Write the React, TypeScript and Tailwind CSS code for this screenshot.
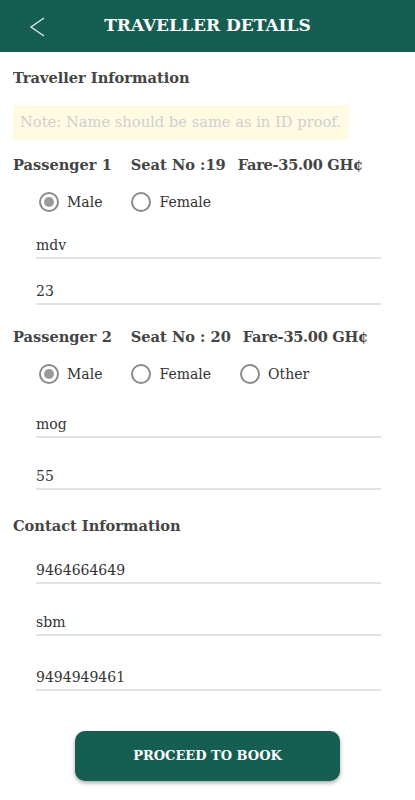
import { useState } from 'react'

const serif = { fontFamily: '"DejaVu Serif", "Liberation Serif", serif' }

function Radio({ label, checked, onClick }: { label: string; checked: boolean; onClick: () => void }) {
  return (
    <button onClick={onClick} className="flex items-center gap-[8px] text-[14px] text-[#333]">
      <span className="w-[20px] h-[20px] rounded-full border-2 border-[#8a8a8a] flex items-center justify-center">
        {checked && <span className="w-[10px] h-[10px] rounded-full bg-[#9a9a9a]" />}
      </span>
      {label}
    </button>
  )
}

function Field({ value, className = '' }: { value: string; className?: string }) {
  return (
    <div className={`ml-[23px] mr-[21px] h-[26px] border-b-2 border-[#e2e2e2] ${className}`}>
      <div className="leading-[24px] text-[14px] text-[#333]">{value}</div>
    </div>
  )
}

function PassengerHeader({ n, seat, fare }: { n: string; seat: string; fare: string }) {
  return (
    <div className="h-[24px] flex items-center font-bold text-[14.6px] text-[#444] whitespace-nowrap">
      <span>Passenger {n}</span>
      <span className="ml-[19px]">{seat}</span>
      <span className="ml-[12px] tracking-[-0.3px]">{fare}</span>
    </div>
  )
}

export default function App() {
  const [g1, setG1] = useState('Male')
  const [g2, setG2] = useState('Male')

  return (
    <div className="w-[415px] h-[800px] bg-white flex flex-col" style={serif}>
      <div className="h-[52px] bg-[#175e52] flex items-center relative">
        <svg className="absolute left-[28px] top-[16px]" width="20" height="22" viewBox="0 0 20 22">
          <path d="M16 2 L3 11 L16 20" fill="none" stroke="#dfe9e6" strokeWidth="1.4" />
        </svg>
        <div className="flex-1 text-center text-white font-bold text-[17px]">TRAVELLER DETAILS</div>
      </div>

      <div className="px-[13px] flex flex-col">
        <div className="mt-[14px] h-[24px] flex items-center font-bold text-[14.6px] text-[#444]">Traveller Information</div>
        <div className="mt-[15px] h-[35px] w-[336px] bg-[#fffbe3] flex items-center px-[7px] text-[14.7px] text-[#cfcfcf] whitespace-nowrap">
          Note: Name should be same as in ID proof.
        </div>

        <div className="mt-[13px]">
          <PassengerHeader n="1" seat="Seat No :19" fare="Fare-35.00 GH¢" />
        </div>
        <div className="mt-[13px] h-[24px] flex items-center pl-[26px] gap-[29px]">
          <Radio label="Male" checked={g1 === 'Male'} onClick={() => setG1('Male')} />
          <Radio label="Female" checked={g1 === 'Female'} onClick={() => setG1('Female')} />
        </div>
        <Field value="mdv" className="mt-[19px]" />
        <Field value="23" className="mt-[20px]" />

        <div className="mt-[20px]">
          <PassengerHeader n="2" seat="Seat No : 20" fare="Fare-35.00 GH¢" />
        </div>
        <div className="mt-[13px] h-[24px] flex items-center pl-[26px] gap-[29px]">
          <Radio label="Male" checked={g2 === 'Male'} onClick={() => setG2('Male')} />
          <Radio label="Female" checked={g2 === 'Female'} onClick={() => setG2('Female')} />
          <Radio label="Other" checked={g2 === 'Other'} onClick={() => setG2('Other')} />
        </div>
        <Field value="mog" className="mt-[26px]" />
        <Field value="55" className="mt-[26px]" />

        <div className="mt-[24px] h-[24px] flex items-center font-bold text-[14.6px] text-[#444]">Contact Information</div>
        <Field value="9464664649" className="mt-[20px]" />
        <Field value="sbm" className="mt-[26px]" />
        <Field value="9494949461" className="mt-[29px] border-[#cfcfcf]" />

        <div className="mt-[40px] flex justify-center">
          <button className="w-[265px] h-[50px] rounded-[10px] bg-[#175e52] text-white font-bold text-[13px] shadow-[0_2px_4px_rgba(0,0,0,0.35)]">
            PROCEED TO BOOK
          </button>
        </div>
      </div>
    </div>
  )
}
